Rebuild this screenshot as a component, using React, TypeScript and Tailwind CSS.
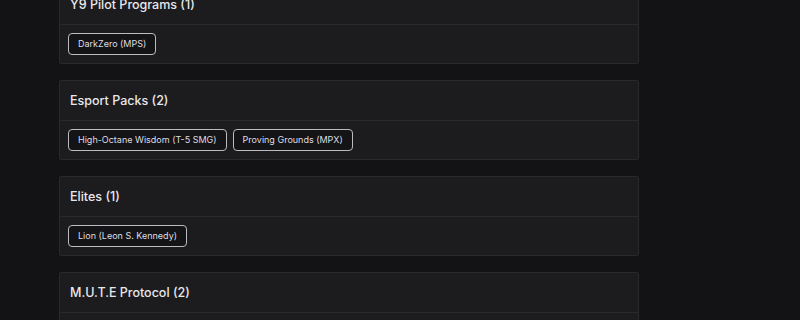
type Group = {
  readonly title: string;
  readonly items: readonly string[];
};

const GROUPS: readonly Group[] = [
  { title: "Y9 Pilot Programs", items: ["DarkZero (MPS)"] },
  {
    title: "Esport Packs",
    items: ["High-Octane Wisdom (T-5 SMG)", "Proving Grounds (MPX)"],
  },
  { title: "Elites", items: ["Lion (Leon S. Kennedy)"] },
  { title: "M.U.T.E Protocol", items: ["Mute Protocol (SMG-11)", "Signal (M590A1)"] },
];

function GroupCard({ group }: { readonly group: Group }) {
  return (
    <section className="rounded-[2px] border border-[#29282c] bg-[#1c1b1e]">
      <header className="flex h-[40px] items-center border-b border-[#29282c] px-[10px] pt-[2px]">
        <h2 className="text-[12.5px] font-medium text-[#e8e8ec]">
          {group.title} ({group.items.length})
        </h2>
      </header>
      <div className="flex flex-wrap gap-[6px] p-2">
        {group.items.map((item) => (
          <span
            key={item}
            className="flex h-[22px] items-center rounded-[4px] border border-[#bcbcc0] bg-[#141316] px-[9px] text-[9px] text-[#dedee4]"
          >
            {item}
          </span>
        ))}
      </div>
    </section>
  );
}

export default function App() {
  return (
    <div
      className="h-[320px] overflow-hidden bg-[#131215]"
      style={{ fontFamily: '"Inter", "Noto Sans", sans-serif' }}
    >
      <div className="ml-[59px] mt-[-16px] flex w-[580px] flex-col gap-4">
        {GROUPS.map((group) => (
          <GroupCard key={group.title} group={group} />
        ))}
      </div>
    </div>
  );
}
